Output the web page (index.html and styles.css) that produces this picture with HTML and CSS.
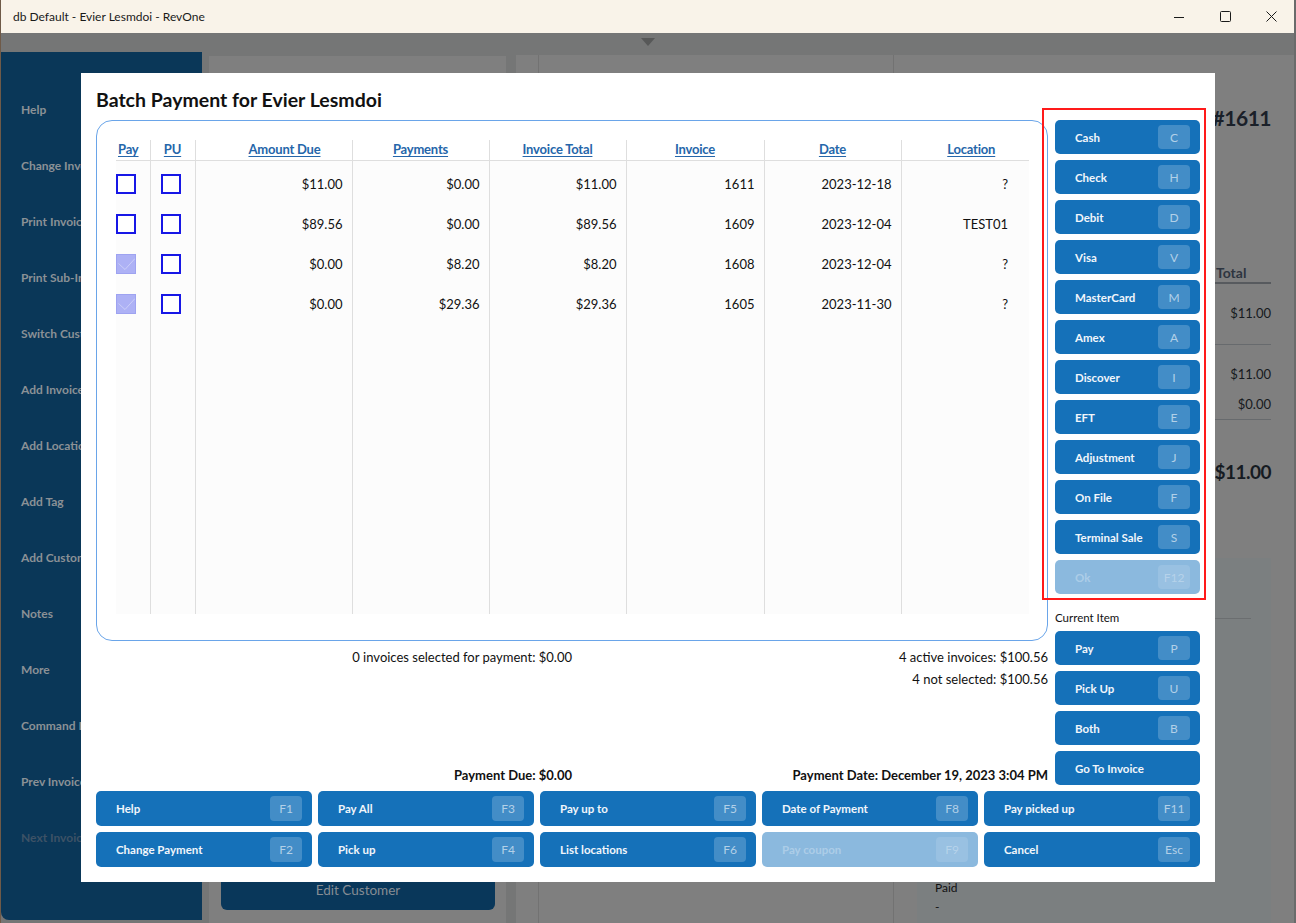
FILE: index.html
```html
<!DOCTYPE html>
<html lang="en">
<head>
<meta charset="utf-8">
<title>db Default - Evier Lesmdoi - RevOne</title>
<link rel="stylesheet" href="styles.css">
</head>
<body>
<div class="window">
  <header class="titlebar">
    <span class="wtitle">db Default - Evier Lesmdoi - RevOne</span>
    <div class="wctrls">
      <span class="wbtn"><svg width="10" height="10" viewBox="0 0 10 10"><path d="M0 5.5h10" stroke="#1a1a1a" stroke-width="1"/></svg></span>
      <span class="wbtn"><svg width="11" height="11" viewBox="0 0 11 11"><rect x="0.5" y="0.5" width="10" height="10" rx="1" fill="none" stroke="#1a1a1a" stroke-width="1"/></svg></span>
      <span class="wbtn"><svg width="11" height="11" viewBox="0 0 11 11"><path d="M0.5 0.5l10 10M10.5 0.5l-10 10" stroke="#1a1a1a" stroke-width="1"/></svg></span>
    </div>
  </header>
  <div class="app">
    <div class="app-top"><span class="caret"></span></div>
    <div class="app-main">
      <nav class="sidebar">
        <div class="nav-item">Help</div>
        <div class="nav-item">Change Invoice</div>
        <div class="nav-item">Print Invoice</div>
        <div class="nav-item">Print Sub-Invoice</div>
        <div class="nav-item">Switch Customer</div>
        <div class="nav-item">Add Invoice</div>
        <div class="nav-item">Add Location</div>
        <div class="nav-item">Add Tag</div>
        <div class="nav-item">Add Customer</div>
        <div class="nav-item">Notes</div>
        <div class="nav-item">More</div>
        <div class="nav-item">Command Line</div>
        <div class="nav-item">Prev Invoice</div>
        <div class="nav-item nav-off">Next Invoice</div>
      </nav>
      <section class="mid">
        <div class="edit-cust">Edit Customer</div>
      </section>
      <section class="content">
        <div class="content-left"></div>
        <div class="content-right">
          <div class="inv-title">Invoice #1611</div>
          <div class="tot-head">Total</div>
          <div class="tot-val">$11.00</div>
          <div class="tot-rule r1"></div>
          <div class="tot-val v2">$11.00</div>
          <div class="tot-val v3">$0.00</div>
          <div class="tot-rule r2"></div>
          <div class="tot-big">$11.00</div>
          <div class="paid-card">
            <div class="pc-rule"></div>
            <div class="pc-paid">Paid</div>
            <div class="pc-dash">-</div>
          </div>
        </div>
      </section>
    </div>
  </div>
</div>

<div class="modal">
  <h1 class="m-title">Batch Payment for Evier Lesmdoi</h1>
  <div class="m-body">
    <div class="m-main">
      <div class="grid-panel">
        <table class="inv">
          <colgroup>
            <col class="c-pay"><col class="c-pu"><col class="c-amt"><col class="c-std"><col class="c-std"><col class="c-inv"><col class="c-std"><col class="c-loc">
          </colgroup>
          <thead>
            <tr>
              <th class="th-pay"><span class="hl">Pay</span></th>
              <th><span class="hl">PU</span></th>
              <th class="th-amt"><span class="hl">Amount Due</span></th>
              <th><span class="hl">Payments</span></th>
              <th><span class="hl">Invoice Total</span></th>
              <th><span class="hl">Invoice</span></th>
              <th><span class="hl">Date</span></th>
              <th class="th-loc"><span class="hl">Location</span></th>
            </tr>
          </thead>
          <tbody>
            <tr class="first">
              <td class="td-pay"><span class="cb"></span></td>
              <td class="td-pu"><span class="cb"></span></td>
              <td>$11.00</td><td>$0.00</td><td>$11.00</td><td>1611</td><td>2023-12-18</td><td class="td-loc">?</td>
            </tr>
            <tr>
              <td class="td-pay"><span class="cb"></span></td>
              <td class="td-pu"><span class="cb"></span></td>
              <td>$89.56</td><td>$0.00</td><td>$89.56</td><td>1609</td><td>2023-12-04</td><td class="td-loc">TEST01</td>
            </tr>
            <tr>
              <td class="td-pay"><span class="cb on"><svg width="18" height="18" viewBox="0 0 18 18"><path d="M1.5 8.5L8 14.5L18 3.5" fill="none" stroke="#cbcef8" stroke-width="1"/></svg></span></td>
              <td class="td-pu"><span class="cb"></span></td>
              <td>$0.00</td><td>$8.20</td><td>$8.20</td><td>1608</td><td>2023-12-04</td><td class="td-loc">?</td>
            </tr>
            <tr>
              <td class="td-pay"><span class="cb on"><svg width="18" height="18" viewBox="0 0 18 18"><path d="M1.5 8.5L8 14.5L18 3.5" fill="none" stroke="#cbcef8" stroke-width="1"/></svg></span></td>
              <td class="td-pu"><span class="cb"></span></td>
              <td>$0.00</td><td>$29.36</td><td>$29.36</td><td>1605</td><td>2023-11-30</td><td class="td-loc">?</td>
            </tr>
            <tr class="filler">
              <td></td><td></td><td></td><td></td><td></td><td></td><td></td><td></td>
            </tr>
          </tbody>
        </table>
      </div>
      <div class="sum">
        <div class="sum-col"><div>0 invoices selected for payment: $0.00</div></div>
        <div class="sum-col"><div>4 active invoices: $100.56</div><div>4 not selected: $100.56</div></div>
      </div>
      <div class="due">
        <div>Payment Due: $0.00</div>
        <div>Payment Date: December 19, 2023 3:04 PM</div>
      </div>
    </div>
    <div class="m-side">
      <div class="btn"><span>Cash</span><span class="key">C</span></div>
      <div class="btn"><span>Check</span><span class="key">H</span></div>
      <div class="btn"><span>Debit</span><span class="key">D</span></div>
      <div class="btn"><span>Visa</span><span class="key">V</span></div>
      <div class="btn"><span>MasterCard</span><span class="key">M</span></div>
      <div class="btn"><span>Amex</span><span class="key">A</span></div>
      <div class="btn"><span>Discover</span><span class="key">I</span></div>
      <div class="btn"><span>EFT</span><span class="key">E</span></div>
      <div class="btn"><span>Adjustment</span><span class="key">J</span></div>
      <div class="btn"><span>On File</span><span class="key">F</span></div>
      <div class="btn"><span>Terminal Sale</span><span class="key">S</span></div>
      <div class="btn dis"><span>Ok</span><span class="key">F12</span></div>
      <div class="side-label">Current Item</div>
      <div class="btn"><span>Pay</span><span class="key">P</span></div>
      <div class="btn"><span>Pick Up</span><span class="key">U</span></div>
      <div class="btn"><span>Both</span><span class="key">B</span></div>
      <div class="btn"><span>Go To Invoice</span></div>
    </div>
  </div>
  <div class="m-foot">
    <div class="btn big"><span>Help</span><span class="key">F1</span></div>
    <div class="btn big"><span>Pay All</span><span class="key">F3</span></div>
    <div class="btn big"><span>Pay up to</span><span class="key">F5</span></div>
    <div class="btn big"><span>Date of Payment</span><span class="key">F8</span></div>
    <div class="btn big"><span>Pay picked up</span><span class="key">F11</span></div>
    <div class="btn big"><span>Change Payment</span><span class="key">F2</span></div>
    <div class="btn big"><span>Pick up</span><span class="key">F4</span></div>
    <div class="btn big"><span>List locations</span><span class="key">F6</span></div>
    <div class="btn big dis"><span>Pay coupon</span><span class="key">F9</span></div>
    <div class="btn big"><span>Cancel</span><span class="key">Esc</span></div>
  </div>
</div>

<div class="annot"></div>
</body>
</html>
```

FILE: styles.css
```css
* { box-sizing: border-box; }
html, body { margin: 0; padding: 0; }
body {
  width: 1296px;
  height: 923px;
  overflow: hidden;
  background: #757676;
  font-family: "Lato", "Noto Sans", sans-serif;
  position: relative;
}

/* ---------- window chrome ---------- */
.window { width: 1296px; height: 923px; display: flex; flex-direction: column; border-right: 2px solid #6a6b6b; border-left: 1px solid #6f5a48; }
.titlebar {
  height: 33px;
  flex: none;
  background: #f9f3e9;
  display: flex;
  align-items: center;
  justify-content: space-between;
}
.wtitle { padding-left: 12px; font-size: 12px; color: #1a1a1a; }
.wctrls { display: flex; }
.wbtn { width: 46px; height: 33px; display: flex; align-items: center; justify-content: center; }

.app { flex: 1; display: flex; flex-direction: column; background: #757676; }
.app-top { height: 19px; flex: none; display: flex; justify-content: center; padding-top: 5px; }
.caret { width: 0; height: 0; border-left: 7px solid transparent; border-right: 7px solid transparent; border-top: 8px solid #575858; }
.app-main { flex: 1; display: flex; align-items: stretch; }

.sidebar {
  width: 201px;
  flex: none;
  background: #0a3758;
  border-radius: 0 0 0 8px;
  margin-bottom: 3px;
  padding: 48px 0 0 20px;
  display: flex;
  flex-direction: column;
  gap: 36px;
}
.nav-item { height: 20px; line-height: 20px; font-size: 12px; font-weight: 700; color: #8b9196; white-space: nowrap; }
.nav-item.nav-off { color: #3d5266; }

.mid {
  width: 297px;
  margin-left: 7px;
  margin-top: 4px;
  background: #7f7f7f;
  display: flex;
  flex-direction: column;
  justify-content: flex-end;
  padding: 0 11px 13px 12px;
}
.edit-cust {
  height: 40px;
  border-radius: 6px;
  background: #09375a;
  color: #868d94;
  font-size: 13.5px;
  display: flex;
  align-items: center;
  justify-content: center;
}

.content {
  flex: 1;
  margin-left: 10px;
  margin-top: 3px;
  background: #7f7f7f;
  display: flex;
  padding: 0 23px 0 22px;
}
.content-left { width: 356px; border-left: 1px solid #727272; border-right: 1px solid #727272; }
.content-right { width: 354px; margin-left: auto; display: flex; flex-direction: column; align-items: flex-end; color: #161a20; }
.inv-title { margin-top: 48px; font-size: 21px; line-height: 30px; font-weight: 700; letter-spacing: -0.5px; color: #1a2029; }
.tot-head { margin-top: 131px; width: 56px; font-size: 14px; line-height: 18px; font-weight: 700; color: #2e3540; border-bottom: 2px solid #575a5e; padding-left: 1px; }
.tot-val { margin-top: 20px; font-size: 13px; line-height: 18px; }
.tot-val.v2 { margin-top: 20px; }
.tot-val.v3 { margin-top: 12px; }
.tot-rule { width: 56px; height: 1px; background: #676a6d; }
.tot-rule.r1 { margin-top: 22px; }
.tot-rule.r2 { margin-top: 6px; }
.tot-big { margin-top: 37px; font-size: 19px; line-height: 30px; font-weight: 700; letter-spacing: -0.5px; color: #161b22; }
.paid-card { align-self: stretch; flex: 1; margin-top: 71px; background: #7b7f80; padding: 0 20px 0 18px; font-size: 12px; color: #111; }
.pc-rule { margin-top: 60px; height: 1px; background: #6b6e70; }
.pc-paid { margin-top: 261px; line-height: 16px; }
.pc-dash { margin-top: 3px; line-height: 16px; }

/* ---------- modal ---------- */
.modal {
  position: absolute;
  left: 81px;
  top: 73px;
  width: 1134px;
  height: 809px;
  background: #ffffff;
  padding: 15px;
  color: #111;
}
.m-title { margin: 0 0 8px; font-size: 19.5px; line-height: 24px; font-weight: 700; color: #111; }
.m-body { display: flex; gap: 7px; }
.m-main { width: 952px; display: flex; flex-direction: column; }

.grid-panel {
  border: 1px solid #6aa5e9;
  border-radius: 16px;
  padding: 19px 18px 26px 19px;
}
.inv { width: 913px; table-layout: fixed; border-collapse: collapse; font-size: 13px; }
.c-pay { width: 34px; }
.c-pu { width: 45px; }
.c-amt { width: 157px; }
.c-std { width: 137px; }
.c-inv { width: 138px; }
.c-loc { width: 128px; }
.inv th {
  height: 20px;
  padding: 0;
  line-height: 18px;
  font-weight: 700;
  letter-spacing: -0.2px;
  text-align: center;
  background: #fff;
  border-bottom: 1px solid #dedede;
  vertical-align: top;
}
.inv th + th, .inv td + td { border-left: 1px solid #dedede; }
.inv th.th-pay { text-align: left; padding-left: 2px; }
.inv th.th-amt { padding-left: 22px; }
.inv th.th-loc { padding-left: 12px; }
.hl { color: #2566aa; text-decoration: underline; text-underline-offset: 2px; }
.inv td {
  background: #fcfcfc;
  padding: 10px 9px 10px 0;
  line-height: 20px;
  height: 40px;
  text-align: right;
  color: #111;
  white-space: nowrap;
}
.inv tr.first td { padding-top: 13px; height: 43px; }
.inv td.td-pay { text-align: left; padding-right: 0; }
.inv td.td-pu { text-align: left; padding: 10px 0 10px 10px; }
.inv tr.first td.td-pu { padding-top: 13px; }
.inv td.td-loc { padding-right: 21px; }
.inv tr.filler td { height: 290px; padding: 0; }
.cb {
  display: inline-block;
  vertical-align: top;
  width: 20px;
  height: 20px;
  border: 2px solid #1717e6;
  background: #fff;
}
.cb.on { border: 1px solid #9ea3f1; background: #adb1f5; }
.cb svg { display: block; }

.sum { display: grid; grid-template-columns: 1fr 1fr; margin-top: 5px; font-size: 13px; line-height: 22px; }
.sum-col { text-align: right; }
.due { display: grid; grid-template-columns: 1fr 1fr; margin-top: auto; font-size: 13px; line-height: 20px; font-weight: 700; text-align: right; }

.m-side { width: 145px; display: flex; flex-direction: column; gap: 6px; }
.side-label { margin-top: 10px; font-size: 11.5px; line-height: 15px; color: #111; }

.btn {
  height: 34px;
  border-radius: 5px;
  background: #1571b9;
  color: #f1f6fb;
  font-size: 11.5px;
  font-weight: 700;
  display: flex;
  align-items: center;
  justify-content: space-between;
  padding: 0 10px 0 20px;
  white-space: nowrap;
}
.key {
  width: 32px;
  height: 24px;
  border-radius: 4px;
  background: rgba(255, 255, 255, 0.2);
  color: rgba(255, 255, 255, 0.6);
  font-weight: 400;
  font-size: 12px;
  display: flex;
  align-items: center;
  justify-content: center;
}
.btn.dis { background: #8bb9de; color: rgba(255, 255, 255, 0.3); }
.btn.dis .key { background: rgba(255, 255, 255, 0.12); color: rgba(255, 255, 255, 0.3); }

.m-foot {
  margin-top: 6px;
  display: grid;
  grid-template-columns: repeat(5, 216px);
  grid-auto-rows: 35px;
  gap: 6px;
}
.btn.big { height: 35px; }
.btn.big .key { height: 25px; }

/* red annotation box drawn over the screenshot */
.annot {
  position: absolute;
  left: 1042px;
  top: 108px;
  width: 164px;
  height: 492px;
  border: 2px solid #ff1a1a;
  pointer-events: none;
}
```
